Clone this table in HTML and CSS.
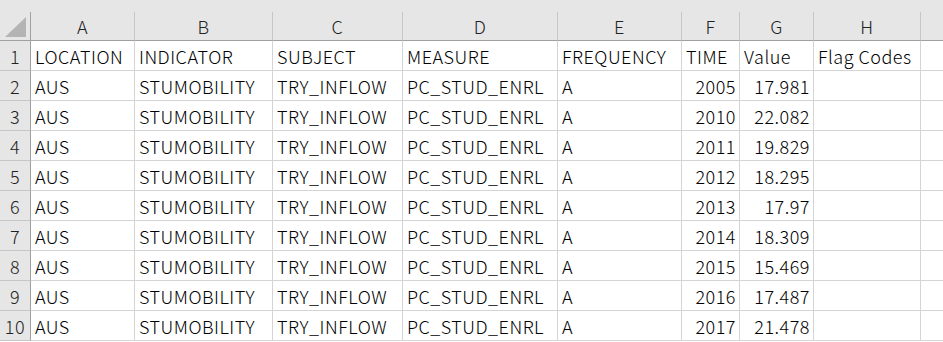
FILE: index.html
```html
<!DOCTYPE html>
<html>
<head>
<meta charset="utf-8">
<link rel="stylesheet" href="styles.css">
</head>
<body>
<div class="sheet">
  <div class="strip"></div>
  <div class="grid">
    <div class="corner"><span class="tri"></span></div>
    <div class="ch">A</div><div class="ch">B</div><div class="ch">C</div><div class="ch">D</div><div class="ch">E</div><div class="ch">F</div><div class="ch">G</div><div class="ch">H</div><div class="ch last"></div>

    <div class="rh">1</div><div class="c">LOCATION</div><div class="c">INDICATOR</div><div class="c">SUBJECT</div><div class="c">MEASURE</div><div class="c">FREQUENCY</div><div class="c">TIME</div><div class="c">Value</div><div class="c">Flag Codes</div><div class="c last"></div>

    <div class="rh">2</div><div class="c">AUS</div><div class="c">STUMOBILITY</div><div class="c">TRY_INFLOW</div><div class="c">PC_STUD_ENRL</div><div class="c">A</div><div class="c n">2005</div><div class="c n">17.981</div><div class="c"></div><div class="c last"></div>
    <div class="rh">3</div><div class="c">AUS</div><div class="c">STUMOBILITY</div><div class="c">TRY_INFLOW</div><div class="c">PC_STUD_ENRL</div><div class="c">A</div><div class="c n">2010</div><div class="c n">22.082</div><div class="c"></div><div class="c last"></div>
    <div class="rh">4</div><div class="c">AUS</div><div class="c">STUMOBILITY</div><div class="c">TRY_INFLOW</div><div class="c">PC_STUD_ENRL</div><div class="c">A</div><div class="c n">2011</div><div class="c n">19.829</div><div class="c"></div><div class="c last"></div>
    <div class="rh">5</div><div class="c">AUS</div><div class="c">STUMOBILITY</div><div class="c">TRY_INFLOW</div><div class="c">PC_STUD_ENRL</div><div class="c">A</div><div class="c n">2012</div><div class="c n">18.295</div><div class="c"></div><div class="c last"></div>
    <div class="rh">6</div><div class="c">AUS</div><div class="c">STUMOBILITY</div><div class="c">TRY_INFLOW</div><div class="c">PC_STUD_ENRL</div><div class="c">A</div><div class="c n">2013</div><div class="c n">17.97</div><div class="c"></div><div class="c last"></div>
    <div class="rh">7</div><div class="c">AUS</div><div class="c">STUMOBILITY</div><div class="c">TRY_INFLOW</div><div class="c">PC_STUD_ENRL</div><div class="c">A</div><div class="c n">2014</div><div class="c n">18.309</div><div class="c"></div><div class="c last"></div>
    <div class="rh">8</div><div class="c">AUS</div><div class="c">STUMOBILITY</div><div class="c">TRY_INFLOW</div><div class="c">PC_STUD_ENRL</div><div class="c">A</div><div class="c n">2015</div><div class="c n">15.469</div><div class="c"></div><div class="c last"></div>
    <div class="rh">9</div><div class="c">AUS</div><div class="c">STUMOBILITY</div><div class="c">TRY_INFLOW</div><div class="c">PC_STUD_ENRL</div><div class="c">A</div><div class="c n">2016</div><div class="c n">17.487</div><div class="c"></div><div class="c last"></div>
    <div class="rh">10</div><div class="c">AUS</div><div class="c">STUMOBILITY</div><div class="c">TRY_INFLOW</div><div class="c">PC_STUD_ENRL</div><div class="c">A</div><div class="c n">2017</div><div class="c n">21.478</div><div class="c"></div><div class="c last"></div>
  </div>
</div>
</body>
</html>
```
FILE: styles.css
```css
html, body {
  margin: 0;
  padding: 0;
  background: #ffffff;
  overflow: hidden;
}
.sheet {
  width: 943px;
  height: 342px;
  overflow: hidden;
  font-family: "Noto Sans CJK JP", "Noto Sans", sans-serif;
  font-size: 18px;
  font-weight: 300;
  letter-spacing: 0.5px;
  color: #000;
}
.strip {
  height: 12px;
  background: #e6e6e6;
}
.grid {
  display: grid;
  grid-template-columns: 31px 104px 138px 130px 155px 124px 58px 74px 107px 40px;
  grid-auto-rows: 30px;
  grid-template-rows: 29px;
}
.grid > div {
  box-sizing: border-box;
  white-space: nowrap;
  overflow: hidden;
  display: flex;
  align-items: center;
  line-height: 1;
}
.corner {
  background: #e6e6e6;
  border-right: 1px solid #a0a0a0;
  border-bottom: 1px solid #a0a0a0;
  position: relative;
}
.tri {
  position: absolute;
  left: 5px;
  bottom: 3px;
  width: 0;
  height: 0;
  border-style: solid;
  border-width: 0 0 20px 21px;
  border-color: transparent transparent #b4b4b4 transparent;
}
.ch {
  background: #e6e6e6;
  border-right: 1px solid #c6c6c6;
  border-bottom: 1px solid #a0a0a0;
  justify-content: center;
  color: #222;
}
.rh {
  background: #e6e6e6;
  border-right: 1px solid #a0a0a0;
  border-bottom: 1px solid #c6c6c6;
  justify-content: center;
  color: #222;
}
.c {
  border-right: 1px solid #d4d4d4;
  border-bottom: 1px solid #d4d4d4;
  padding: 0 4px;
}
.c.n {
  justify-content: flex-end;
  padding-right: 3px;
}
```
